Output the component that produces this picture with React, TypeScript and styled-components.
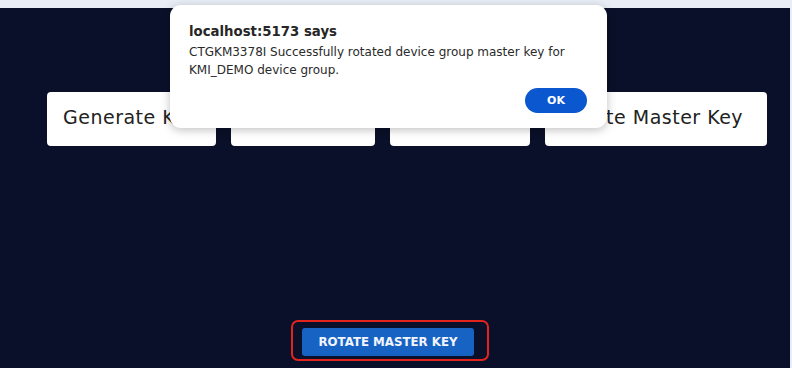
import React from "react";
import styled, { createGlobalStyle } from "styled-components";

const Global = createGlobalStyle`
  html, body { margin: 0; padding: 0; background: #e9edf5; }
  body { font-family: "DejaVu Sans", "Liberation Sans", sans-serif; }
  #root { width: 792px; height: 368px; overflow: hidden; }
`;

const Page = styled.div`
  position: relative;
  width: 792px;
  height: 368px;
  padding-top: 8px;
  padding-right: 2px;
  box-sizing: border-box;
`;

const Main = styled.main`
  height: 360px;
  background: #0a1029;
  display: flex;
  flex-direction: column;
  box-sizing: border-box;
  padding: 84px 0 0 47px;
`;

const CardRow = styled.div`
  display: flex;
  gap: 15px;
`;

const Card = styled.div<{ $w: number }>`
  width: ${(p) => p.$w}px;
  height: 54px;
  background: #ffffff;
  border-radius: 4px;
  box-sizing: border-box;
  padding: 14px 16px 0;
  font-family: "DejaVu Sans", "Liberation Sans", sans-serif;
  font-size: 19px;
  line-height: 22px;
  letter-spacing: 0.5px;
  color: #222;
  white-space: nowrap;
  overflow: hidden;
`;

const Spacer = styled.div`
  flex: 1;
`;

const Highlight = styled.div`
  align-self: flex-start;
  margin: 0 0 7px 244px;
  border: 2px solid #e3241c;
  border-radius: 7px;
  padding: 6px 13px 3px 9px;
`;

const RotateButton = styled.button`
  width: 172px;
  height: 28px;
  border: none;
  border-radius: 3px;
  background: #1763c4;
  color: #f2f5fb;
  font-family: "DejaVu Sans", "Liberation Sans", sans-serif;
  font-weight: 700;
  font-size: 11.8px;
  text-transform: uppercase;
  display: flex;
  align-items: center;
  justify-content: center;
  padding: 0;
`;

const Dialog = styled.div`
  position: absolute;
  left: 170px;
  top: 5px;
  width: 437px;
  height: 123px;
  background: #ffffff;
  border-radius: 11px;
  box-shadow: 0 2px 10px rgba(0, 0, 0, 0.25);
  box-sizing: border-box;
  padding: 18px 19px 0 19px;
  display: flex;
  flex-direction: column;
  font-family: "DejaVu Sans", "Liberation Sans", sans-serif;
  color: #1f1f1f;
`;

const DialogTitle = styled.div`
  font-size: 13.3px;
  font-weight: 700;
  line-height: 18px;
  margin-bottom: 2px;
  color: #262626;
`;

const DialogMessage = styled.div`
  font-size: 12px;
  line-height: 18px;
  color: #2a2a2a;
`;

const DialogActions = styled.div`
  display: flex;
  justify-content: flex-end;
  margin-top: 9px;
  padding-right: 1px;
`;

const OkButton = styled.button`
  width: 62px;
  height: 25px;
  border: none;
  border-radius: 13px;
  background: #0b57d0;
  color: #ffffff;
  font-family: "DejaVu Sans", "Liberation Sans", sans-serif;
  font-weight: 700;
  font-size: 11px;
  padding: 0;
`;

export default function App() {
  return (
    <>
      <Global />
      <Page>
        <Main>
          <CardRow>
            <Card $w={169}>Generate Key</Card>
            <Card $w={144}>Import Key</Card>
            <Card $w={140}>Export Key</Card>
            <Card $w={222}>Rotate Master Key</Card>
          </CardRow>
          <Spacer />
          <Highlight>
            <RotateButton>Rotate Master Key</RotateButton>
          </Highlight>
        </Main>
        <Dialog>
          <DialogTitle>localhost:5173 says</DialogTitle>
          <DialogMessage>
            CTGKM3378I Successfully rotated device group master key for
            <br />
            KMI_DEMO device group.
          </DialogMessage>
          <DialogActions>
            <OkButton>OK</OkButton>
          </DialogActions>
        </Dialog>
      </Page>
    </>
  );
}
